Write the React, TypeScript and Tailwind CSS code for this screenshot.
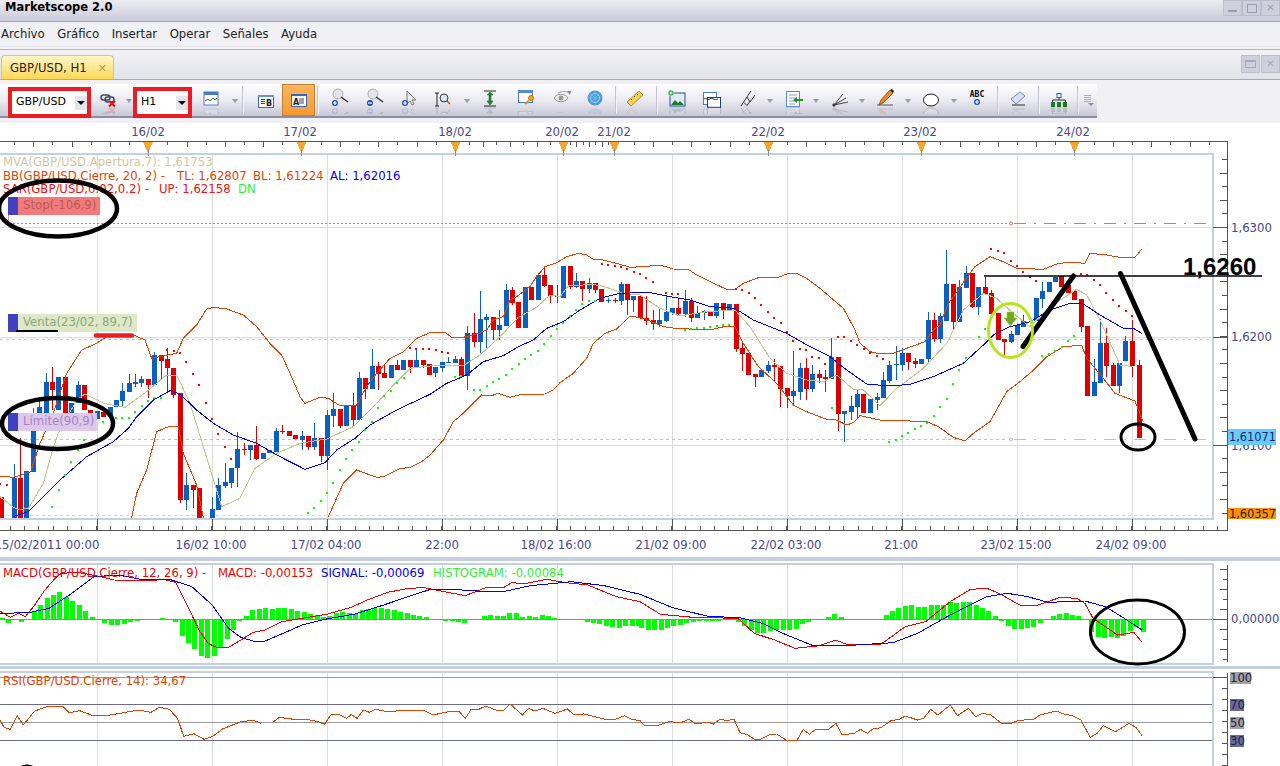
import type { ReactNode } from "react";

// flat zoom coords -> svg points
const pts = (flat: number[], ox: number, oy: number, sx = 3, sy = 3) => {
  const out: string[] = [];
  for (let i = 0; i < flat.length; i += 2) out.push(`${ox + flat[i] / sx},${oy + flat[i + 1] / sy}`);
  return out.join(" ");
};

type C = [number, number, number, number, number, string];

const candlesA: C[] = [
  [3,770,833,0,0,"r"],[42,713,833,672,0,"b"],[60,713,833,595,0,"r"],[78,693,833,0,0,"b"],[98,570,695,505,0,"b"],[118,500,560,470,0,"b"],
  [138,427,520,398,0,"b"],[156,427,450,382,510,"r"],[175,411,510,0,0,"b"],[194,411,520,0,0,"r"],[214,490,520,0,0,"b"],[233,435,490,423,0,"b"],
  [252,435,510,0,0,"r"],[271,510,530,0,0,"r"],[291,513,537,0,0,"b"],[310,515,530,0,0,"r"],[330,500,530,0,0,"b"],[348,480,502,0,0,"b"],
  [367,453,483,430,500,"b"],[386,430,455,402,0,"b"],[405,427,432,402,440,"b"],[424,417,430,408,440,"b"],[443,417,435,0,475,"r"],[463,346,435,335,0,"b"],
  [483,345,362,0,417,"r"],[501,357,385,325,455,"r"],[520,384,465,0,475,"r"],[540,460,780,0,790,"r"],[559,735,780,700,810,"b"],[579,735,750,0,805,"r"],
  [597,745,833,0,0,"r"],[636,808,833,770,0,"b"],[655,735,810,715,0,"b"],[675,727,738,670,745,"b"],[694,683,730,0,745,"b"],[712,627,685,575,740,"b"],
  [732,627,630,610,645,"r"],[750,615,630,0,660,"b"],[769,615,657,558,660,"r"],[789,640,657,0,0,"b"],[808,630,640,0,0,"b"],[828,573,635,565,0,"b"],
  [847,574,576,555,582,"r"],[866,573,587,0,0,"r"],[886,585,598,0,0,"r"],[905,588,600,573,630,"b"],[924,588,620,0,630,"r"],[943,595,622,548,630,"b"],
  [962,595,647,0,665,"r"],[981,525,648,510,690,"b"],[1000,507,527,460,560,"b"],[1020,507,558,0,565,"r"],[1039,498,558,0,0,"b"],[1058,498,540,460,558,"r"],
  [1077,414,540,396,0,"b"],[1096,414,447,0,478,"r"],[1115,378,447,327,0,"b"],[1134,378,402,365,450,"r"],[1153,400,414,373,0,"r"],[1172,375,414,0,0,"b"],
  [1191,375,390,360,0,"r"],[1210,360,390,0,0,"b"],[1229,360,382,0,400,"r"],[1248,360,382,330,0,"b"],[1268,360,375,0,385,"r"],[1287,372,405,0,0,"r"],
];

const candlesB: C[] = [
  [16,412,428,0,440,"b"],[36,397,413,0,425,"b"],[55,397,398,380,0,"b"],[74,388,400,378,0,"b"],[93,388,437,380,0,"r"],[112,310,437,288,480,"b"],
  [132,310,335,250,350,"r"],[150,267,335,183,370,"b"],[169,261,270,252,355,"b"],[189,262,300,0,330,"r"],[208,285,300,240,330,"b"],[228,180,288,162,0,"b"],
  [246,180,220,170,225,"r"],[265,216,293,0,0,"r"],[285,171,293,0,0,"b"],[304,171,210,0,0,"r"],[323,135,210,128,0,"b"],[342,135,168,112,172,"r"],
  [361,165,198,0,218,"r"],[381,197,200,165,218,"r"],[400,107,203,0,0,"b"],[420,108,170,0,178,"r"],[438,153,170,130,175,"b"],[457,153,177,0,212,"r"],
  [477,159,177,145,188,"b"],[495,158,180,0,188,"r"],[514,177,215,0,0,"r"],[534,210,213,205,218,"b"],[554,210,212,205,220,"r"],[573,162,213,157,225,"b"],
  [591,162,210,0,255,"r"],[610,197,210,0,245,"b"],[630,197,265,0,268,"r"],[649,264,272,197,285,"r"],[669,270,281,240,300,"r"],[687,270,281,235,290,"b"],
  [707,245,274,195,275,"b"],[726,234,250,0,255,"b"],[745,234,253,208,255,"r"],[765,213,252,180,260,"b"],[783,213,263,205,275,"r"],[802,250,263,228,0,"b"],
  [822,243,250,240,270,"b"],[840,245,258,0,0,"r"],[859,219,258,0,265,"b"],[879,219,240,0,268,"r"],[898,222,240,0,0,"b"],[918,222,357,0,367,"r"],
  [936,354,372,338,422,"r"],[955,368,435,0,0,"r"],[975,432,441,0,470,"r"],[994,420,441,0,0,"b"],[1014,405,423,392,430,"b"],[1033,405,410,388,455,"r"],
  [1051,409,476,0,530,"r"],[1071,474,497,0,533,"r"],[1090,484,497,363,522,"b"],[1110,414,485,398,510,"b"],[1128,414,477,385,510,"r"],[1147,432,477,405,485,"b"],
  [1167,432,444,420,460,"r"],[1186,441,446,420,485,"r"],[1204,381,447,325,0,"b"],[1224,380,552,0,602,"r"],[1243,544,551,0,635,"b"],[1263,528,545,498,570,"b"],
];

const candlesC: C[] = [
  [22,492,530,478,568,"b"],[40,492,548,0,0,"r"],[60,506,548,0,0,"b"],[80,502,510,488,540,"b"],[98,450,503,425,0,"b"],[117,405,452,393,458,"b"],
  [137,402,406,349,450,"b"],[156,368,405,355,423,"b"],[175,368,395,0,420,"r"],[195,393,402,385,415,"r"],[214,387,402,0,0,"b"],[233,270,388,245,402,"b"],
  [252,270,328,250,335,"r"],[270,258,328,248,338,"b"],[289,162,272,60,0,"b"],[309,162,275,0,300,"r"],[328,171,276,150,0,"b"],[348,129,175,107,0,"b"],
  [366,129,230,0,235,"r"],[385,171,230,0,255,"b"],[405,171,192,140,195,"r"],[424,190,252,180,0,"r"],[444,248,330,0,0,"r"],[463,328,335,0,375,"r"],
  [482,312,335,303,340,"b"],[501,286,315,0,0,"b"],[520,272,292,255,0,"b"],[558,205,272,0,0,"b"],[577,183,207,155,235,"b"],[597,155,186,0,0,"b"],
  [615,140,156,0,0,"b"],[634,138,172,0,0,"r"],[653,165,188,0,0,"r"],[673,183,210,0,0,"r"],[692,208,290,0,305,"r"],[711,288,497,0,0,"r"],
  [731,457,498,388,0,"b"],[750,340,458,268,0,"b"],[769,340,407,295,440,"r"],[789,405,468,400,0,"r"],[807,400,467,0,488,"b"],[826,333,392,318,0,"b"],
  [846,333,407,270,440,"r"],[866,405,623,390,0,"r"],
];

const upper = [
  pts([0,708,38,712,55,708,92,695,120,610,160,520,200,400,245,330,290,310,320,290,400,285,435,300,455,355,530,340,550,295,590,255,620,207,640,202,680,207,730,225,770,260,810,310,845,345,870,400,900,470,915,490,960,472,985,475,1020,497,1070,495,1100,440,1130,400,1170,355,1210,335,1250,295,1290,278], 0, 240),
  pts([45,307,65,322,95,323,130,315,170,300,190,270,220,260,240,210,260,200,300,170,320,140,345,110,380,98,410,80,445,70,470,75,490,88,520,90,560,100,600,112,640,110,690,105,730,117,775,118,800,135,840,155,890,178,915,178,940,160,985,143,1045,142,1075,130,1100,130,1130,145,1170,175,1205,205,1240,235,1270,290], 430, 230),
  pts([15,300,30,340,60,365,90,372,130,370,170,355,225,335,250,300,270,285,295,220,325,180,345,150,375,110,420,80,460,95,500,115,580,118,625,100,665,97,705,100,720,70,770,75,810,82,855,82,875,58], 850, 230),
].join(" ");

const lowerA = pts([395,833,410,760,440,690,470,575,510,558,535,560,550,640,590,735,610,833], 0, 240);
const lowerB = [
  pts([985,830,1030,730,1070,690,1130,712,1150,710,1200,685,1230,683,1265,665,1290,645], 0, 240),
  pts([40,630,70,575,100,550,155,495,185,497,205,490,240,502,275,493,345,492,370,480,390,458,430,430,470,385,490,340,525,310,560,297,600,258,640,265,700,290,735,295,840,300,890,288,915,290,940,340,985,410,1040,460,1090,525,1130,545,1190,568,1215,568,1250,585,1270,578], 430, 230),
  pts([30,557,90,570,155,572,230,575,265,590,310,622,345,633,370,610,420,575,470,485,510,455,545,425,590,380,640,350,695,346,710,385,760,445,795,490,855,513,878,572], 850, 230),
].join(" ");

const midLine = [
  pts([38,830,85,815,130,770,180,720,260,650,340,605,385,565,410,530,460,480,510,452,540,462,590,510,640,550,700,585,770,610,840,650,915,688,975,668,1010,630,1065,595,1110,555,1190,510,1290,463], 0, 240),
  pts([50,460,110,435,160,395,220,377,265,350,310,330,350,295,400,275,450,240,510,205,570,190,630,188,660,188,720,200,780,210,840,230,915,235,970,270,1020,290,1070,310,1140,350,1200,380,1250,420], 430, 230),
  pts([50,462,120,468,180,463,250,440,340,400,400,345,430,315,480,290,540,275,600,240,660,220,700,222,750,255,820,295,850,295,875,310], 850, 230),
].join(" ");

const mva = [
  pts([0,770,35,798,55,810,85,805,130,730,155,640,175,580,230,480,255,462,310,490,375,502,440,455,500,405,530,405,570,490,610,620,665,800,720,775,765,685,830,640,900,610,980,597,1060,560,1130,490,1190,425,1230,385,1290,378], 0, 240),
  pts([100,407,150,375,210,320,265,262,320,232,360,195,390,200,415,168,490,163,530,172,580,190,630,195,690,235,750,258,830,245,915,240,960,290,1020,385,1070,430,1130,450,1180,455,1220,435,1270,478], 430, 230),
  pts([40,480,90,527,140,475,220,415,290,340,340,240,400,190,440,205,490,250,540,290,600,230,680,178,710,195,750,270,810,405,850,410], 850, 230),
].join(" ");

const dotsRed: [number, number][] = [];
const dotsGreen: [number, number][] = [];
const addDots = (list: [number, number][], flat: number[], ox: number, oy: number) => {
  for (let i = 0; i < flat.length; i += 2) list.push([ox + flat[i] / 3, oy + flat[i + 1] / 3]);
};
addDots(dotsRed, [0,733,20,735,500,330,522,333,540,340,558,367,578,402,597,435,618,489,636,537,654,582,675,621,693,657,1230,325,1248,326,1268,326,1287,328], 0, 240);
addDots(dotsGreen, [156,800,177,750,195,705,213,665,234,630,252,600,310,545,348,535,366,535,386,533,405,516,425,497,443,482,463,474,483,474,924,818,943,803,963,782,981,759,999,728,1020,690,1038,656,1056,630,1077,605,1096,570,1116,546,1134,503,1153,468,1173,452,1191,430,1212,413], 0, 240);
addDots(dotsRed, [17,360,36,366,54,369,110,372,516,101,534,104,554,107,573,110,591,117,612,125,630,131,649,143,669,156,707,188,726,191,744,191,918,176,936,180,957,188,975,204,993,225,1014,245,1032,264,1053,279,1071,306,1089,332,1110,356,1128,360,1146,380,1167,383,1185,402,1224,321,1242,321,1263,333,1281,345], 430, 230);
addDots(dotsGreen, [75,441,93,437,132,480,150,480,171,468,189,456,207,447,228,435,246,417,267,402,285,387,304,375,323,363,342,342,363,318,381,297,399,279,420,258,438,240,457,222,477,213,495,212,765,300,783,297,801,294,822,294,840,291,860,288,879,285,897,285,1206,534], 430, 230);
addDots(dotsRed, [22,345,42,357,60,368,80,378,98,387,423,57,444,63,463,70,482,93,501,108,519,126,540,141,558,153,693,133,711,135,732,150,750,165,768,190,789,210,807,228,828,243,846,258], 850, 230);
addDots(dotsGreen, [116,635,137,630,156,618,174,608,195,597,213,588,231,578,252,558,270,530,291,507,309,462,327,420,349,383,387,321,405,297,576,378,597,372,615,363,636,351,654,333,672,318], 850, 230);

const histA = [4,-10,-2,-8,3,27,45,65,75,82,67,55,45,27,9,0,-10,-17,-17,-14,-8,-4,-1,0,3,5,3,-8,-50,-70,-87,-110,-116,-108,-85,-58,-32,-5,12,28,32,34,31,35,36,32,27,24,17,15,8,12,19,22,21,17,30,31,35,36,31,30,24,21,15,12,7,0,0,-4,-4,-7,-10,0,0,10,15,12,12,20,21,9,12,9,15,12,6,0,3,0,0,-7,-9,-13,-18,-22,-24,-20,-20,-20];
const histB = [-26,-30,-32,-31,-25,-20,-15,-10,-7,-5,-4,-4,-3,-2,3,-7,-20,-32,-39,-40,-34,-30,-30,-30,-27,-14,-8,0,3,7,18,7,0,0,0,0,0,3,13,26,36,41,43,39,37,45,44,45,54,50,52,54,43,36,27,12,-3,-20,-27,-28,-25,-22,-10,0,10,18,19,15,10,3,-36,-52,-54,-53,-54,-48,-35,-22,-36];

const macdRed = [
  pts([0,168,25,187,45,175,62,185,85,150,110,105,135,70,150,55,190,52,235,62,280,75,360,78,400,73,430,82,450,130,470,180,490,230,510,265,530,277,560,277,590,255,620,232,650,225,690,200,740,190,800,178,860,157,900,135,950,112,1000,100,1040,98,1080,108,1140,122,1190,98,1235,97,1255,82,1280,87,1340,73,1380,82,1440,90,1510,125,1568,140], 0, 555, 2.45),
  pts([50,178,130,187,240,190,280,235,330,255,380,280,440,272,480,255,510,270,590,268,650,215,700,200,760,140,810,103,850,100,880,115,930,150,970,152,1030,127,1070,130,1090,145,1110,190,1140,215,1170,240,1210,232,1230,262], 640, 555, 2.45),
].join(" ");
const macdBlue = [
  pts([0,175,70,173,120,160,170,120,230,65,290,60,340,72,420,75,470,95,520,150,560,220,590,247,620,258,650,258,690,237,740,210,800,192,870,177,940,150,1000,125,1050,105,1110,103,1190,110,1240,108,1300,92,1400,80,1480,92,1568,118], 0, 555, 2.45),
  pts([80,158,170,185,240,187,300,205,350,235,420,270,530,270,620,263,680,235,760,180,850,125,900,115,950,125,1000,142,1090,138,1140,155,1180,185,1230,225], 640, 555, 2.45),
].join(" ");
const rsiA = pts([0,495,10,517,25,523,42,482,57,510,85,468,120,453,155,455,170,473,195,467,230,483,270,480,340,465,370,472,390,457,415,463,435,490,450,544,475,536,500,553,520,545,545,522,590,500,620,496,640,505], 0, 555, 2.45);
const rsiB = [
  pts([670,500,685,487,720,493,750,493,780,500,795,508,810,480,830,478,850,490,860,478,875,490,890,465,905,472,920,463,950,470,980,467,1040,467,1060,480,1100,470,1125,470,1140,490,1155,462,1170,465,1190,453,1215,465,1235,465,1250,447,1280,480,1295,460,1310,468,1330,460,1360,475,1390,462,1405,478,1430,477,1480,492,1510,492,1530,482,1545,492,1568,497], 0, 555, 2.45),
  pts([10,510,40,513,70,500,100,503,120,493,135,505,170,503,180,507,195,493,215,497,230,492,245,533,265,540,280,553,295,553,320,538,335,537,360,557,385,555,400,523,415,538,430,523,460,525,480,505,495,540,525,535,540,523,557,535,570,522,590,518,615,497,635,493,650,483,680,495,695,490,712,463,730,480,760,450,778,482,805,460,822,485,840,475,860,480,885,505,910,505,925,497,965,492,980,480,1020,468,1040,478,1060,482,1080,495,1103,547,1120,535,1135,512,1165,530,1198,505,1215,517,1230,542], 640, 555, 2.45),
].join(" ");

const gridX = [97.5, 212.5, 327.5, 442.5, 557.5, 672.5, 787.5, 902.5, 1017.5, 1132.5];
const markers = [148, 301.5, 455.5, 563.5, 614.5, 768.5, 921.5, 1074.5];
const dateLabels: [string, number][] = [["16/02",148],["17/02",300],["18/02",455],["20/02",562],["21/02",614],["22/02",768],["23/02",920],["24/02",1073]];
const timeLabels: [string, number][] = [["15/02/2011 00:00",47],["16/02 10:00",211],["17/02 04:00",326],["22:00",442],["18/02 16:00",556],["21/02 09:00",671],["22/02 03:00",786],["21:00",901],["23/02 15:00",1016],["24/02 09:00",1131]];

const topTicks: [number, boolean][] = [];
for (let i = 0; 14 + i * 19.17 < 455; i++) topTicks.push([14 + i * 19.17, i % 2 === 1]);
for (let i = 0; i < 8; i++) topTicks.push([455.5 + i * 13.5, i % 2 === 0]);
for (let i = 0; i < 8; i++) topTicks.push([563.5 + i * 6.375, i % 2 === 0]);
for (let i = 0; 614.5 + i * 19.17 < 1222; i++) topTicks.push([614.5 + i * 19.17, i % 2 === 0]);

const bottomTicks: number[] = [];
for (let i = 0; i < 85; i++) bottomTicks.push(10 + i * 14.375);

const axisText = "#48488a";
const frameColor = "#c5d0de";
const fs = 11.7;

function Candles({ data, ox, oy }: { data: C[]; ox: number; oy: number }) {
  return (
    <>
      {data.map((c, i) => {
        const x = Math.round(ox + c[0] / 3);
        const top = oy + c[1] / 3;
        const bot = oy + c[2] / 3;
        const fill = c[5] === "r" ? "#de0000" : "#0a60c0";
        return (
          <g key={i} fill={fill}>
            {(c[3] > 0 || c[4] > 0) && <rect x={x} y={oy + (c[3] || c[1]) / 3} width={1} height={((c[4] || c[2]) - (c[3] || c[1])) / 3} />}
            <rect x={x - 2} y={top} width={5} height={Math.max(bot - top, 1)} />
          </g>
        );
      })}
    </>
  );
}

function MainChart() {
  return (
    <svg width={1280} height={434} viewBox="0 123 1280 434" className="block" shapeRendering="crispEdges">
      <defs>
        <clipPath id="plot"><rect x={0} y={155} width={1212} height={363} /></clipPath>
      </defs>
      {dateLabels.map(([t, x]) => (
        <text key={t} x={x} y={136} textAnchor="middle" fontSize={fs} fill={axisText}>{t}</text>
      ))}
      <line x1={0} x2={1228} y1={141.5} y2={141.5} stroke="#555" />
      {topTicks.map(([x, long], i) => (
        <line key={i} x1={Math.round(x) + 0.5} x2={Math.round(x) + 0.5} y1={142} y2={long ? 147 : 145} stroke="#555" />
      ))}

      {gridX.map((x) => <line key={x} x1={x} x2={x} y1={155} y2={518} stroke="#dcdcdc" />)}
      {[227.5, 337.5, 445.5].map((y) => <line key={y} x1={0} x2={1212} y1={y} y2={y} stroke="#dcdcdc" />)}

      <rect x={-2} y={154} width={1214.5} height={364.5} fill="none" stroke={frameColor} strokeWidth={2} />

      <g strokeWidth={1} fill="none">
        <path d="M8.5 215V223" stroke="#f09090" />
        <line x1={9} x2={1008} y1={223.5} y2={223.5} stroke="#ee6a6a" strokeDasharray="2 2" />
        <line x1={1014} x2={1212} y1={223.5} y2={223.5} stroke="#ee6a6a" strokeDasharray="12 8 2 8" />
        <line x1={0} x2={1212} y1={339.5} y2={339.5} stroke="#b8d2a8" strokeDasharray="3 3" />
        <line x1={0} x2={1008} y1={439.5} y2={439.5} stroke="#c9b6de" strokeDasharray="3 3" />
        <line x1={1014} x2={1212} y1={439.5} y2={439.5} stroke="#c9b6de" strokeDasharray="12 8 2 8" />
        <line x1={0} x2={1212} y1={515.5} y2={515.5} stroke="#d6d6d6" strokeDasharray="3 3" />
      </g>

      <g clipPath="url(#plot)">
        <Candles data={candlesA} ox={0} oy={240} />
        <Candles data={candlesB} ox={430} oy={230} />
        <Candles data={candlesC} ox={850} oy={230} />
        <g fill="none" strokeWidth={1}>
          <polyline points={mva} stroke="#c4c48c" />
          <polyline points={upper} stroke="#e04400" />
          <polyline points={lowerA} stroke="#e04400" />
          <polyline points={lowerB} stroke="#e04400" />
          <polyline points={midLine} stroke="#0000f0" />
        </g>
        {dotsRed.map(([x, y], i) => <rect key={i} x={Math.round(x) - 1} y={Math.round(y) - 1} width={2} height={2} fill="#ff0000" />)}
        {dotsGreen.map(([x, y], i) => <rect key={i} x={Math.round(x) - 1} y={Math.round(y) - 1} width={2} height={2} fill="#00ff00" />)}
      </g>

      {markers.map((x) => (
        <g key={x}>
          <path d={`M${x - 5} 142H${x + 5}L${x} 153Z`} fill="#f7a52c" />
          <line x1={x} x2={x} y1={150} y2={156} stroke="#8a8a9a" />
        </g>
      ))}
      <circle cx={1011} cy={223.5} r={1.5} fill="#fff" stroke="#ee6a6a" shapeRendering="auto" />
      <circle cx={1011} cy={439.5} r={1.5} fill="#fff" stroke="#c9b6de" shapeRendering="auto" />

      <line x1={0} x2={1228} y1={530.5} y2={530.5} stroke="#555" />
      <line x1={1227.5} x2={1227.5} y1={141} y2={531} stroke="#555" />
      {bottomTicks.map((x) => <line key={x} x1={x} x2={x} y1={526} y2={530} stroke="#555" />)}
      {gridX.map((x) => <line key={x} x1={x} x2={x} y1={519} y2={530} stroke="#555" />)}
      {Array.from({ length: 27 }, (_, i) => 159.5 + i * 13.6).map((y, i) => (
        <line key={y} x1={i % 2 === 1 ? 1220 : 1222} x2={1227} y1={y} y2={y} stroke="#555" />
      ))}
      {[227.5, 337.5, 445.5].map((y) => <line key={y} x1={1213} x2={1227} y1={y} y2={y} stroke="#555" />)}

      <text x={1231} y={232} fontSize={fs} fill={axisText}>1,6300</text>
      <text x={1231} y={341} fontSize={fs} fill={axisText}>1,6200</text>
      <text x={1231} y={450} fontSize={fs} fill={axisText}>1,6100</text>
      <rect x={1228} y={429} width={48} height={16} fill="#66ccff" />
      <text x={1229} y={441} fontSize={11.4} fill="#222266">1,61071</text>
      <rect x={1228} y={508} width={48} height={11} fill="#ff9000" />
      <text x={1229} y={517.5} fontSize={11.4} fill="#222222">1,60357</text>

      {timeLabels.map(([t, x]) => (
        <text key={t} x={x} y={549} textAnchor="middle" fontSize={fs} fill={axisText}>{t}</text>
      ))}
    </svg>
  );
}

function MacdChart() {
  return (
    <svg width={1280} height={105} viewBox="0 561 1280 105" className="block" shapeRendering="crispEdges">
      <rect x={-2} y={564} width={1214.5} height={99.5} fill="none" stroke={frameColor} strokeWidth={2} />
      {gridX.map((x) => <line key={x} x1={x} x2={x} y1={565} y2={663} stroke="#dcdcdc" />)}
      {histA.map((h, i) => {
        const x = Math.round((4 + i * 15.75) / 2.45) - 2;
        return <rect key={i} x={x} y={h > 0 ? 619.5 - h / 3 : 619.5} width={5} height={Math.abs(h) / 3} fill="#00ff00" />;
      })}
      {histB.map((h, i) => {
        const x = Math.round(640 + (3 + i * 15.75) / 2.45) - 2;
        return <rect key={i} x={x} y={h > 0 ? 619.5 - h / 3 : 619.5} width={5} height={Math.abs(h) / 3} fill="#00ff00" />;
      })}
      <rect x={0} y={619} width={1212} height={1} fill="#00f000" />
      <g fill="none" strokeWidth={1}>
        <polyline points={macdRed} stroke="#f00000" />
        <polyline points={macdBlue} stroke="#0000f0" />
      </g>
      <line x1={1227.5} x2={1227.5} y1={565} y2={662} stroke="#555" />
      {Array.from({ length: 10 }, (_, i) => 569.5 + i * 10).map((y, i) => (
        <line key={y} x1={i % 2 === 1 ? 1223 : 1220} x2={1227} y1={y} y2={y} stroke="#555" />
      ))}
      <line x1={1213} x2={1227} y1={619.5} y2={619.5} stroke="#555" />
      <text x={1231} y={623} fontSize={fs} fill={axisText}>0,00000</text>
    </svg>
  );
}

function RsiChart() {
  return (
    <svg width={1280} height={97} viewBox="0 669 1280 97" className="block" shapeRendering="crispEdges">
      <rect x={-2} y={672} width={1214.5} height={120} fill="none" stroke={frameColor} strokeWidth={2} />
      {gridX.map((x) => <line key={x} x1={x} x2={x} y1={673} y2={766} stroke="#dcdcdc" />)}
      <line x1={0} x2={1212} y1={677.5} y2={677.5} stroke="#999" />
      <line x1={0} x2={1212} y1={704.5} y2={704.5} stroke="#6a6a8c" />
      <line x1={0} x2={1212} y1={722.5} y2={722.5} stroke="#999" />
      <line x1={0} x2={1212} y1={740.5} y2={740.5} stroke="#6a6a8c" />
      <g fill="none" strokeWidth={1} stroke="#e04400">
        <polyline points={rsiA} />
        <polyline points={rsiB} />
      </g>
      <line x1={1227.5} x2={1227.5} y1={673} y2={766} stroke="#555" />
      {Array.from({ length: 9 }, (_, i) => 677.5 + i * 11).map((y) => (
        <line key={y} x1={1222} x2={1227} y1={y} y2={y} stroke="#555" />
      ))}
      <line x1={1213} x2={1227} y1={677.5} y2={677.5} stroke="#555" />
      <rect x={1230} y={672} width={21} height={12} fill="#a0a0a0" />
      <rect x={1230} y={699} width={14} height={12} fill="#6a6a9a" />
      <rect x={1230} y={717} width={14} height={12} fill="#a0a0a0" />
      <rect x={1230} y={735} width={14} height={12} fill="#6a6a9a" />
      <g fontSize={fs} fill="#222244">
        <text x={1230} y={682}>100</text>
        <text x={1230} y={709}>70</text>
        <text x={1230} y={727}>50</text>
        <text x={1230} y={745}>30</text>
      </g>
    </svg>
  );
}

// the hand drawn marks on top of all three panels
function Annotations() {
  return (
    <svg width={1280} height={643} viewBox="0 123 1280 643" className="absolute left-0 top-0 pointer-events-none">
      <g fill="none" stroke="#000">
        <ellipse cx={58} cy={208.5} rx={59} ry={28} strokeWidth={4.5} />
        <ellipse cx={57.5} cy={423.5} rx={55.5} ry={25.5} strokeWidth={4.5} />
        <ellipse cx={1138} cy={437} rx={17} ry={13} strokeWidth={3} />
        <ellipse cx={1137.5} cy={632} rx={47} ry={32} strokeWidth={3} />
        <ellipse cx={27} cy={772} rx={9} ry={6} strokeWidth={3} />
        <line x1={16} x2={58} y1={331} y2={331} strokeWidth={2} />
        <line x1={984} x2={1262} y1={276} y2={276} strokeWidth={1.5} />
        <line x1={1023} y1={346.5} x2={1073.5} y2={276} strokeWidth={5} strokeLinecap="round" />
        <line x1={1120.5} y1={273.5} x2={1195} y2={439} strokeWidth={5} strokeLinecap="round" />
      </g>
      <line x1={96} x2={132} y1={335.5} y2={335.5} stroke="#ed1c24" strokeWidth={4.5} strokeLinecap="round" />
      <ellipse cx={1010.5} cy={330.5} rx={22} ry={27} fill="none" stroke="#b5e61d" strokeWidth={3} />
      <path d="M1007 312H1014V318H1017L1010.5 326L1004 318H1007Z" fill="#6fa81c" stroke="#8cc83a" strokeWidth={0.5} />
      <text x={1183} y={275} fontSize={24} fontWeight={700} fill="#000" className="font-['Liberation_Sans',sans-serif]">1,6260</text>
    </svg>
  );
}

function OrderTag({ text, className }: { text: string; className: string }) {
  return (
    <div className={`absolute left-[8px] h-[18px] flex items-center ${className}`}>
      <div className="w-[10px] h-full bg-[#4040c0]" />
      <span className="pl-[5px] whitespace-nowrap">{text}</span>
    </div>
  );
}

// icon box, with the faint mirror image under it that the toolbar icons have
function Ico({ children, w = 24, mirror = true }: { children: ReactNode; w?: number; mirror?: boolean }) {
  return (
    <svg width={w} height={30} viewBox={`0 0 ${w} 30`} className="shrink-0">
      {children}
      {mirror && <g transform="matrix(1 0 0 -1 0 46)" opacity={0.18}>{children}</g>}
    </svg>
  );
}

const PlusDot = ({ x, y, c = "#1a50b0", minus = false }: { x: number; y: number; c?: string; minus?: boolean }) => (
  <g>
    <circle cx={x} cy={y} r={3} fill={c} />
    <path d={minus ? `M${x - 2} ${y}h4` : `M${x - 2} ${y}h4M${x} ${y - 2}v4`} stroke="#fff" strokeWidth={1.2} />
  </g>
);

const icons: Record<string, ReactNode> = {
  link: (
    <>
      <g fill="none" stroke="#444a60" strokeWidth={1.5}>
        <rect x={5} y={11} width={9} height={5} rx={2.5} />
        <rect x={9} y={13} width={9} height={5} rx={2.5} />
      </g>
      <path d="M13 17l6 5.5M19 17l-6 5.5" stroke="#e01010" strokeWidth={2} />
    </>
  ),
  mini: (
    <>
      <rect x={5} y={8} width={14} height={13} fill="#fff" stroke="#4a78c8" />
      <rect x={5} y={8} width={14} height={3} fill="#4a78c8" />
      <path d="M6 17l3-2 2 2" stroke="#d02020" fill="none" />
      <path d="M11 17l3-3 2 2 2-2" stroke="#209020" fill="none" />
    </>
  ),
  split: (
    <>
      <rect x={4.5} y={11.5} width={15} height={12} fill="#fff" stroke="#3a68b8" />
      <rect x={4} y={11} width={16} height={2} fill="#6a94d8" />
      <path d="M7 15.5h4M7 17.5h4M7 19.5h4" stroke="#445" />
      <text x={12} y={21.5} fontSize={8} fontWeight={700} fill="#223">B</text>
    </>
  ),
  zoomIn: (
    <>
      <circle cx={11} cy={10} r={5} fill="#e4e4ea" stroke="#aaa" />
      <path d="M14 13l7 5" stroke="#333" strokeWidth={1.5} />
      <PlusDot x={8} y={19} />
    </>
  ),
  zoomOut: (
    <>
      <circle cx={11} cy={10} r={5} fill="#e4e4ea" stroke="#aaa" />
      <path d="M14 13l7 5" stroke="#333" strokeWidth={1.5} />
      <PlusDot x={8} y={19} minus />
    </>
  ),
  cursor: (
    <>
      <path d="M11 7v13l3-3 2 4 2-1-2-4h4Z" fill="#eee" stroke="#777" />
      <PlusDot x={9} y={19} />
    </>
  ),
  iZoom: (
    <>
      <path d="M6 9v13M4 9h4M4 22h4" stroke="#222" fill="none" />
      <circle cx={13} cy={14} r={4} fill="#dfe8f4" stroke="#334" />
      <path d="M16 17l3 3" stroke="#c05020" strokeWidth={1.5} />
    </>
  ),
  fit: (
    <>
      <path d="M6 7h12M6 22h12" stroke="#222" />
      <path d="M12 8l3 3h-2v6h2l-3 4-3-4h2v-6H9Z" fill="#1c8a2c" stroke="#0c5a18" strokeWidth={0.5} />
    </>
  ),
  key: (
    <>
      <rect x={4.5} y={6.5} width={14} height={12} fill="#fff" stroke="#4a78c8" />
      <rect x={4} y={6} width={15} height={3} fill="#5a88d8" />
      <circle cx={17} cy={14} r={2.5} fill="#f0a820" stroke="#c07a10" />
      <path d="M15 16l-4 4M12 19l1 1" stroke="#e09418" strokeWidth={1.6} />
    </>
  ),
  eye: (
    <>
      <path d="M4 14c3-5 11-5 14 0-3 5-11 5-14 0Z" fill="#eee" stroke="#999" />
      <circle cx={11} cy={14} r={2.5} fill="#999" />
      <path d="M8 9c4-2 8-2 11 0" stroke="#999" fill="none" />
      <path d="M17 7l4 0-1 4Z" fill="#888" />
    </>
  ),
  globe: (
    <>
      <circle cx={12} cy={14} r={7.5} fill="#4a9ad8" />
      <circle cx={12} cy={14} r={4.5} fill="none" stroke="#9ad0f0" />
      <path d="M12 7v14M5 14h14M7 9l10 10M17 9L7 19" stroke="#86c0e8" strokeWidth={0.6} />
    </>
  ),
  ruler: (
    <>
      <path d="M4 18L16 7l4 4L8 22Z" fill="#f4d060" stroke="#b89020" />
      <path d="M8 15l1 1M11 12l1 1M14 10l1 1" stroke="#806010" />
    </>
  ),
  picture: (
    <>
      <rect x={5} y={9} width={15} height={13} fill="#dfeaf8" stroke="#2a4a90" />
      <path d="M6 21l4-5 3 3 2-2 4 4Z" fill="#1c7a2c" />
      <circle cx={6} cy={9} r={3} fill="#3aa040" stroke="#fff" strokeWidth={0.5} />
      <path d="M4.5 9h3M6 7.5v3" stroke="#fff" />
    </>
  ),
  windows: (
    <>
      <rect x={3.5} y={8.5} width={13} height={12} fill="#fff" stroke="#4a78c8" />
      <rect x={7.5} y={13.5} width={13} height={10} fill="#fff" stroke="#223a78" />
      <path d="M4 15c2-2 4 2 6 0s4 2 8 0" stroke="#222" fill="none" />
    </>
  ),
  fork: (
    <g stroke="#333" fill="none">
      <path d="M5 22L11 13M11 13l4-6M11 13l3 5M14 18l5-7M8 18.5l3 3M11 21.5l3-4" />
    </g>
  ),
  list: (
    <>
      <rect x={4.5} y={7.5} width={13} height={15} fill="#fff" stroke="#5a88d0" />
      <path d="M7 11h8M7 14h8M7 17h6M7 20h6" stroke="#88a0c8" />
      <path d="M11 16l4-3v2h6v2h-6v2Z" fill="#2a8a30" />
    </>
  ),
  fan: (
    <g stroke="#444" fill="none">
      <path d="M6 21L15 10M6 21l12-7M6 21l14-3" />
      <circle cx={6} cy={21} r={1.2} fill="#222" />
    </g>
  ),
  pencil: (
    <>
      <path d="M6 21l2-5L17 6l3 3-10 10Z" fill="#f28a1c" stroke="#a85010" />
      <path d="M17 6l3 3 1-2-2-2Z" fill="#222" />
      <path d="M4 21h16" stroke="#555" />
    </>
  ),
  ellipse: <ellipse cx={12} cy={16} rx={7.5} ry={6} fill="#fff" stroke="#222" />,
  abc: (
    <>
      <text x={12} y={13} textAnchor="middle" fontSize={8} fontWeight={700} fill="#000" className="font-['DejaVu_Sans_Mono',monospace]">ABC</text>
      <PlusDot x={12} y={18} />
    </>
  ),
  eraser: (
    <>
      <path d="M5 15l9-7 5 4-9 8Z" fill="#d8e0f4" stroke="#7a88b0" />
      <path d="M6 21h13" stroke="#666" strokeWidth={1.5} />
    </>
  ),
  org: (
    <>
      <rect x={10} y={9.5} width={4} height={4} fill="#fff" stroke="#2a5ab0" />
      <path d="M12 14v2M5.5 18v-2h13v2" stroke="#333" fill="none" />
      <rect x={4} y={18} width={4} height={5} fill="#1a7a24" />
      <rect x={10} y={18} width={4} height={5} fill="#1a7a24" />
      <rect x={16} y={18} width={4} height={5} fill="#1a7a24" />
    </>
  ),
  menu: (
    <>
      <path d="M3 11.5h7M3 13.5h7M3 15.5h7M3 17.5h7" stroke="#9a9aaa" strokeWidth={0.8} />
      <path d="M7 19h6l-3 3Z" fill="#8a8a9a" />
    </>
  ),
};

function Tool({ name, w, mirror = true }: { name: string; w: string; mirror?: boolean }) {
  return (
    <div className={`${w} shrink-0 flex justify-center`}>
      <Ico mirror={mirror}>{icons[name]}</Ico>
    </div>
  );
}

function Caret({ w }: { w: string }) {
  return (
    <div className={`${w} shrink-0 flex justify-center pt-[15px]`}>
      <div className="w-0 h-0 border-x-[3px] border-x-transparent border-t-[4px] border-t-[#9a9ab0]" />
    </div>
  );
}

function Sep({ w }: { w: string }) {
  return (
    <div className={`${w} h-full shrink-0 flex justify-center py-[2px]`}>
      <div className="w-[2px] h-full bg-[#f4f4f8] border-l border-l-[#c4c4d0]" />
    </div>
  );
}

function SymbolSelect({ value, w, textW }: { value: string; w: string; textW: string }) {
  return (
    <div className={`${w} shrink-0 h-[31px] mt-[3px] border-[4px] border-[#ed1c24] bg-white flex items-center text-[11px]`}>
      <span className={`${textW} pl-[4px] pb-[3px]`}>{value}</span>
      <div className="w-[12px] h-[14px] bg-[#e4e4ec] flex items-center justify-center">
        <div className="w-0 h-0 border-x-[4px] border-x-transparent border-t-[4px] border-t-black" />
      </div>
    </div>
  );
}

function Toolbar() {
  return (
    <div className="w-[1097px] h-[34px] flex items-start bg-gradient-to-b from-[#ffffff] via-[#ecebf2] to-[#c8c8d6] border-b-2 border-b-[#8e8ea2] text-black">
      <div className="w-[8px] shrink-0" />
      <SymbolSelect value="GBP/USD" w="w-[83px]" textW="w-[63px]" />
      <Tool name="link" w="w-[34px]" />
      <Caret w="w-[8px]" />
      <SymbolSelect value="H1" w="w-[59px]" textW="w-[39px]" />
      <Tool name="mini" w="w-[38px]" />
      <Caret w="w-[10px]" />
      <Sep w="w-[6px]" />
      <div className="w-[6px] shrink-0" />
      <Tool name="split" w="w-[28px]" mirror={false} />
      <div className="w-[2px] shrink-0" />
      <div className="w-[33px] h-[32px] shrink-0 flex justify-center bg-gradient-to-b from-[#fdb55c] to-[#f99a30] border border-[#c08030]">
        <svg width={24} height={30} viewBox="0 0 24 30" className="shrink-0">
          <rect x={4.5} y={9.5} width={15} height={12} fill="#fff" stroke="#3a68b8" />
          <rect x={4} y={9} width={16} height={2} fill="#3a68b8" />
          <text x={6} y={19.5} fontSize={8} fontWeight={700} fill="#223">A</text>
          <path d="M12 14h5M12 16h5M12 18h5" stroke="#445" />
        </svg>
      </div>
      <Sep w="w-[6px]" />
      <Tool name="zoomIn" w="w-[36px]" />
      <Tool name="zoomOut" w="w-[34px]" />
      <Tool name="cursor" w="w-[34px]" />
      <Tool name="iZoom" w="w-[36px]" />
      <Caret w="w-[12px]" />
      <Tool name="fit" w="w-[34px]" />
      <Tool name="key" w="w-[38px]" />
      <Tool name="eye" w="w-[34px]" />
      <Tool name="globe" w="w-[32px]" />
      <Sep w="w-[10px]" />
      <Tool name="ruler" w="w-[28px]" />
      <Sep w="w-[16px]" />
      <Tool name="picture" w="w-[24px]" />
      <Tool name="windows" w="w-[46px]" />
      <Tool name="fork" w="w-[26px]" />
      <Caret w="w-[18px]" />
      <Tool name="list" w="w-[30px]" />
      <Caret w="w-[14px]" />
      <Tool name="fan" w="w-[34px]" />
      <Caret w="w-[10px]" />
      <Tool name="pencil" w="w-[36px]" />
      <Caret w="w-[10px]" />
      <Tool name="ellipse" w="w-[36px]" />
      <Caret w="w-[10px]" />
      <Tool name="abc" w="w-[36px]" mirror={false} />
      <Sep w="w-[6px]" />
      <Tool name="eraser" w="w-[34px]" />
      <Sep w="w-[8px]" />
      <Tool name="org" w="w-[32px]" />
      <Sep w="w-[6px]" />
      <div className="w-[16px] shrink-0 flex justify-center overflow-hidden">
        <Ico w={16} mirror={false}>{icons.menu}</Ico>
      </div>
    </div>
  );
}

function WinButton({ children, className = "" }: { children: ReactNode; className?: string }) {
  return (
    <div className={`w-[19px] flex items-center justify-center bg-[#d0d0dc] border border-[#bcbccc] ${className}`}>
      {children}
    </div>
  );
}

export default function App() {
  return (
    <div className="w-[1280px] h-[766px] overflow-hidden bg-white font-['DejaVu_Sans',sans-serif] text-[11.7px] leading-none text-[#222]">
      <div className="h-[22px] flex justify-between bg-gradient-to-b from-[#ececf2] to-[#cbcbd9] border-b border-b-[#a4a4bc]">
        <span className="pl-[5px] pt-[2px] font-bold text-[11.5px] text-black">Marketscope 2.0</span>
        <div className="flex h-[16px] text-[#9c9cb0]">
          <WinButton><div className="w-[9px] h-[2px] mt-[6px] bg-[#9c9cb0]" /></WinButton>
          <WinButton><div className="w-[10px] h-[9px] border border-[#9c9cb0]" /></WinButton>
          <WinButton><span className="font-bold text-[10px]">✕</span></WinButton>
        </div>
      </div>

      <div className="h-[25px] flex items-center gap-[12.5px] pl-[1px] pt-[2px] bg-[#f0f0f5] border-b border-b-[#e2e2e8]">
        <span>Archivo</span>
        <span>Gráfico</span>
        <span>Insertar</span>
        <span>Operar</span>
        <span>Señales</span>
        <span>Ayuda</span>
      </div>
      <div className="h-[3px] bg-[#f3f3f7] border-b border-b-[#b0b0c6]" />

      <div className="h-[30px] flex justify-between items-end bg-gradient-to-b from-[#f2f2f6] to-[#e2e2ea] border-b border-b-[#a8a8c0]">
        <div className="ml-[1px] w-[113px] h-[24px] flex items-center justify-between pl-[8px] pr-[6px] pt-[2px] rounded-t-[4px] bg-gradient-to-b from-[#fff6c8] to-[#ffd84e] border border-b-0 border-[#cfc48a]">
          <span>GBP/USD, H1</span>
          <span className="font-bold text-[11px] text-[#b8a040]">✕</span>
        </div>
        <div className="flex h-[18px] mb-[6px] gap-[1px] text-[#a8a8bc]">
          <WinButton><div className="w-[11px] h-[8px] border border-t-2 border-[#a8a8bc]" /></WinButton>
          <WinButton><span className="font-bold text-[10px]">✕</span></WinButton>
        </div>
      </div>

      <div className="h-[43px] pt-[4px] bg-[#f0f0f5]">
        <Toolbar />
      </div>

      <div className="relative">
        <MainChart />
        <div className="absolute left-[3px] top-[33px] leading-[13px] whitespace-pre">
          <div className="text-[#cfc8a0]">MVA(GBP/USD.Apertura,7): 1,61753</div>
          <div className="flex mt-[1px] text-[#e04400]">
            <span className="w-[174px]">BB(GBP/USD.Cierre, 20, 2) -</span>
            <span className="w-[76px]">TL: 1,62807</span>
            <span className="w-[77px]">BL: 1,61224</span>
            <span className="text-[#0000f0]">AL: 1,62016</span>
          </div>
          <div className="flex text-[#f01010]">
            <span className="w-[156px]">SAR(GBP/USD,0.02,0.2) -</span>
            <span className="w-[79px]">UP: 1,62158</span>
            <span className="text-[#30f030]">DN</span>
          </div>
        </div>
        <OrderTag text="Stop(-106,9)" className="top-[74px] w-[92px] bg-[#f27a7a] text-[#b85a5a]" />
        <OrderTag text="Venta(23/02, 89,7)" className="top-[191px] w-[129px] bg-[#dce8c8] text-[#8ea67a]" />
        <OrderTag text="Límite(90,9)" className="top-[290px] w-[89px] bg-[#dcc8ea] text-[#a484c4]" />

        <div className="h-[4px] bg-[#c5d0de]" />
        <div className="relative">
          <MacdChart />
          <div className="absolute left-[3px] top-[6px] leading-[13px] whitespace-pre flex">
            <span className="w-[215px] text-[#f00000]">MACD(GBP/USD.Cierre, 12, 26, 9) -</span>
            <span className="w-[103px] text-[#f00000]">MACD: -0,00153</span>
            <span className="w-[112px] text-[#0000f0]">SIGNAL: -0,00069</span>
            <span className="text-[#30f030]">HISTOGRAM: -0,00084</span>
          </div>
        </div>
        <div className="h-[3px] bg-[#c5d0de]" />
        <div className="relative">
          <RsiChart />
          <div className="absolute left-[3px] top-[6px] leading-[13px] text-[#e04400]">RSI(GBP/USD.Cierre, 14): 34,67</div>
        </div>
        <Annotations />
      </div>
    </div>
  );
}
